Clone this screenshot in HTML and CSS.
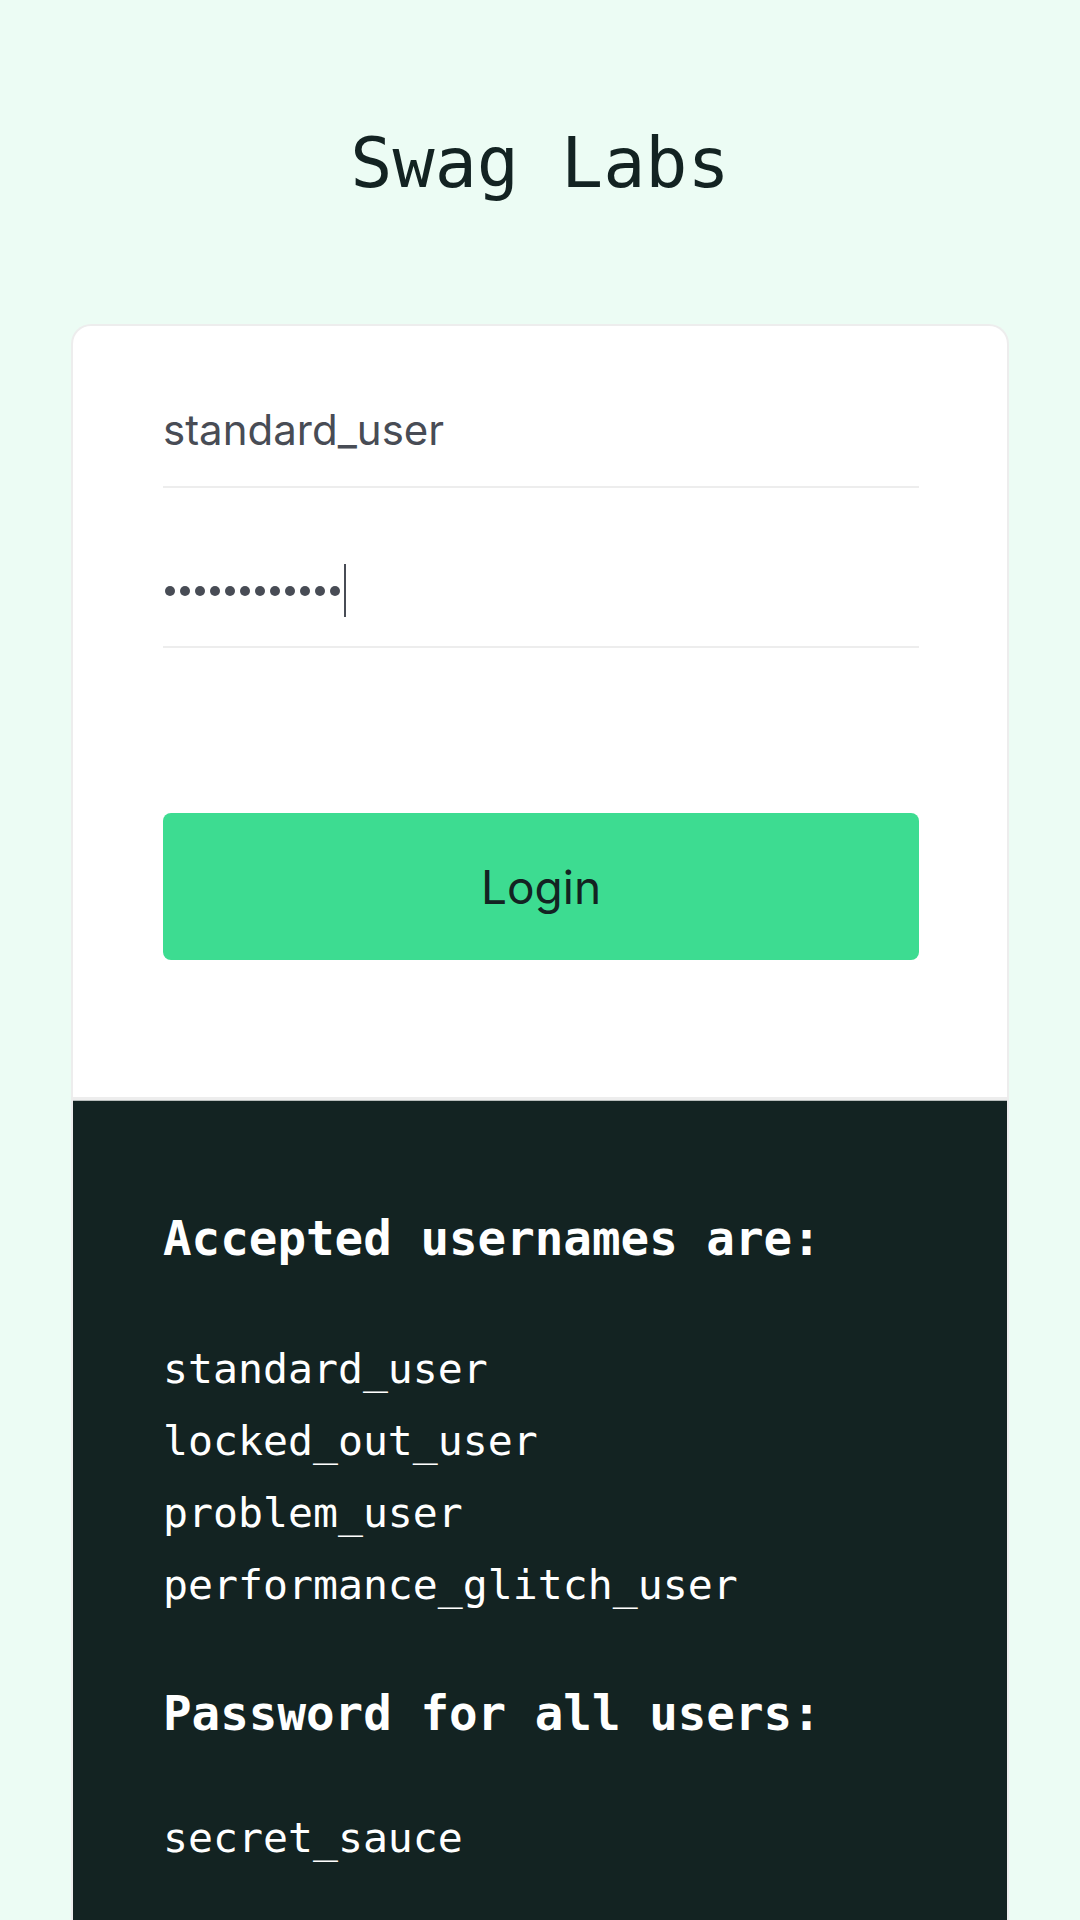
FILE: index.html
```html
<!DOCTYPE html>
<html lang="en">
<head>
<meta charset="utf-8">
<title>Swag Labs</title>
<link rel="stylesheet" href="styles.css">
</head>
<body>
  <header class="login-logo">Swag Labs</header>
  <main class="login-card">
    <form class="login-form">
      <div class="field">standard_user</div>
      <div class="field field-password">
        <span class="dots">
          <i></i><i></i><i></i><i></i><i></i><i></i><i></i><i></i><i></i><i></i><i></i><i></i>
        </span>
        <span class="caret"></span>
      </div>
      <button type="button" class="login-button">Login</button>
    </form>
    <section class="credentials">
      <h4 class="cred-title">Accepted usernames are:</h4>
      <ul class="cred-list">
        <li>standard_user</li>
        <li>locked_out_user</li>
        <li>problem_user</li>
        <li>performance_glitch_user</li>
      </ul>
      <h4 class="cred-title cred-title-2">Password for all users:</h4>
      <ul class="cred-list">
        <li>secret_sauce</li>
      </ul>
    </section>
  </main>
</body>
</html>
```
FILE: styles.css
```css
html, body {
  margin: 0;
  padding: 0;
  background: #ecfcf4;
}

body {
  font-family: "Inter", "Liberation Sans", sans-serif;
  color: #132322;
}

.login-logo {
  padding-top: 121px;
  font-family: "DejaVu Sans Mono", "Liberation Mono", monospace;
  font-size: 70px;
  line-height: 84px;
  text-align: center;
  color: #132322;
  font-weight: 400;
}

.login-card {
  margin: 119px 71px 0 71px;
  border: 2px solid #ededed;
  border-bottom: none;
  border-radius: 20px 20px 0 0;
  background: #ffffff;
  overflow: hidden;
}

.login-form {
  display: flex;
  flex-direction: column;
  padding: 48px 88px 137px 90px;
  border-bottom: 3px solid #ededed;
}

.field {
  padding: 30px 0;
  border-bottom: 2px solid #ededed;
  font-size: 42px;
  line-height: 52px;
  height: 52px;
  color: #484c55;
}

.field-password {
  margin-top: 46px;
  display: flex;
  align-items: center;
}

.dots {
  display: flex;
  gap: 5px;
  margin-left: 2px;
  padding-top: 2px;
}

.dots i {
  display: block;
  width: 10px;
  height: 10px;
  border-radius: 50%;
  background: #484c55;
}

.caret {
  display: block;
  width: 2px;
  height: 53px;
  margin-left: 4px;
  background: #484c55;
}

.login-button {
  margin-top: 165px;
  height: 147px;
  border: none;
  border-radius: 8px;
  background: #3ddc91;
  color: #132322;
  font-family: "Inter", "Liberation Sans", sans-serif;
  font-size: 46px;
  padding: 0;
}

.credentials {
  background: #132322;
  border-top: 1px solid #b9bdbc;
  padding: 108px 90px 120px 90px;
  color: #ffffff;
}

.cred-title {
  margin: 0;
  font-family: "DejaVu Sans Mono", "Liberation Mono", monospace;
  font-weight: 700;
  font-size: 47.5px;
  line-height: 60px;
}

.cred-title-2 {
  margin-top: 63px;
}

.cred-list {
  list-style: none;
  margin: 64px 0 0 0;
  padding: 0;
  font-family: "DejaVu Sans Mono", "Liberation Mono", monospace;
  font-size: 41.5px;
  line-height: 72px;
}

.cred-title-2 + .cred-list {
  margin-top: 58px;
}
```
